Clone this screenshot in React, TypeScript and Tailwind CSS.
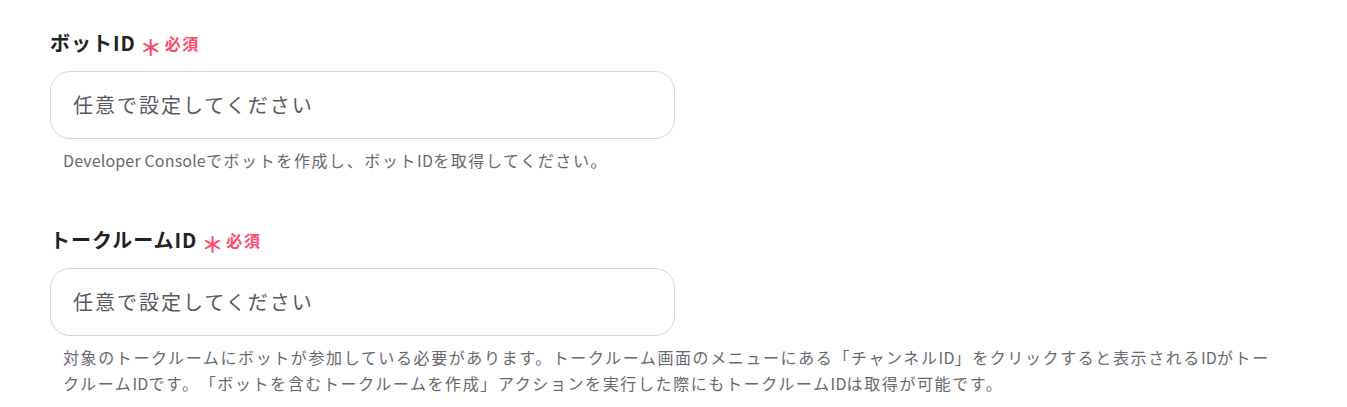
import React from "react";

const font = {
  fontFamily: '"Noto Sans CJK JP", "Noto Sans", sans-serif',
};

function Mixed({ text }: { text: string }) {
  const parts = text.split(/([A-Za-z][A-Za-z ]*[A-Za-z]|[A-Za-z])/);
  return (
    <>
      {parts.map((p, i) =>
        i % 2 === 1 ? (
          <span key={i} className="tracking-[0.01em]">
            {p}
          </span>
        ) : (
          <span key={i}>{p}</span>
        )
      )}
    </>
  );
}

function Field({ label, help }: { label: string; help: string[] }) {
  return (
    <div className="flex flex-col">
      <div className="flex items-center h-[30px] tracking-[0.06em]">
        <span className="text-[20px] font-bold text-[#222222] leading-[30px]">{label}</span>
        <span className="ml-[4px] mt-[6px] text-[22px] font-bold text-[#ff4b6b] leading-[30px]">＊</span>
        <span className="ml-[2px] text-[16px] font-bold text-[#ff4b6b] leading-[30px] tracking-[0.1em]">必須</span>
      </div>
      <div className="mt-[13px] w-[625px] h-[68px] rounded-[20px] border border-[#d4d7dc] bg-white flex items-center pl-[22px]">
        <span className="text-[20px] text-[#555a60] tracking-[0.1em] leading-none">任意で設定してください</span>
      </div>
      <div className="mt-[8px] pl-[13px] w-[1240px] text-[16px] leading-[26px] text-[#666a70] tracking-[0.1em] [text-spacing-trim:space-all]">
        {help.map((line, i) => (
          <div key={i} className="whitespace-nowrap">
            <Mixed text={line} />
          </div>
        ))}
      </div>
    </div>
  );
}

export default function App() {
  return (
    <div className="w-[1347px] h-[407px] bg-white pl-[50px] pt-[28px]" style={font}>
      <div className="flex flex-col gap-[52px]">
        <Field
          label="ボットID"
          help={["Developer Consoleでボットを作成し、ボットIDを取得してください。"]}
        />
        <Field
          label="トークルームID"
          help={[
            "対象のトークルームにボットが参加している必要があります。トークルーム画面のメニューにある「チャンネルID」をクリックすると表示されるIDがトー",
            "クルームIDです。「ボットを含むトークルームを作成」アクションを実行した際にもトークルームIDは取得が可能です。",
          ]}
        />
      </div>
    </div>
  );
}
